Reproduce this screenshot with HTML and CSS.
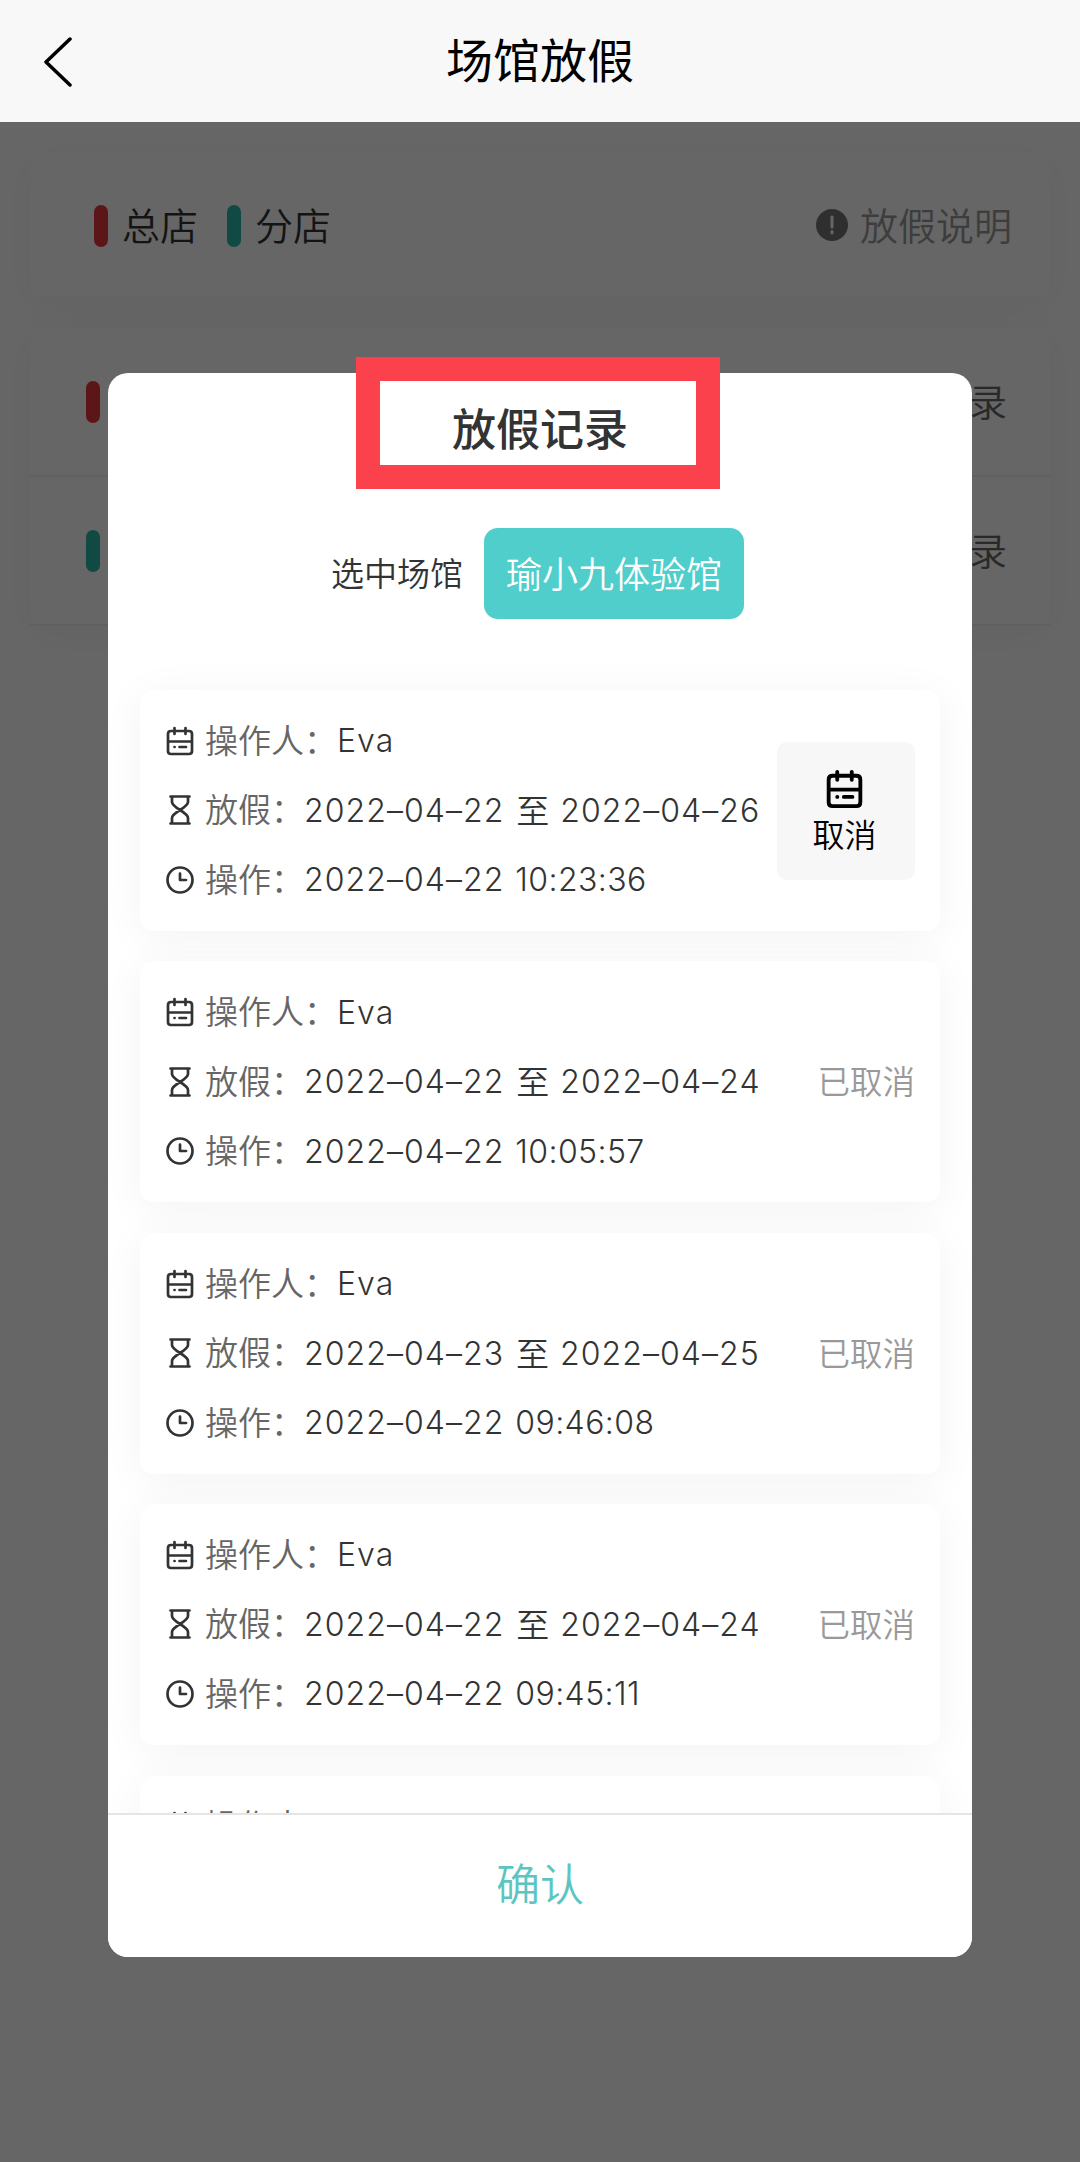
FILE: index.html
```html
<!DOCTYPE html>
<html lang="zh-CN">
<head>
  <meta charset="UTF-8" />
  <title>场馆放假</title>
  <link rel="stylesheet" href="styles.css">
</head>
<body>

  <!-- icons -->
  <svg class="sprite" width="0" height="0">
    <symbol id="calendar" viewBox="0 0 28 30">
      <path d="M5 5H23Q26 5 26 8V25Q26 28 23 28H5Q2 28 2 25V8Q2 5 5 5ZM2 15.500H26M8.500 2V8M19.500 2V8M13.500 21H20M8.500 21H8.600" />
    </symbol>
    <symbol id="hourglass" viewBox="0 0 28 30">
      <path d="M4.500 1.500H23.500M4.500 28.500H23.500M6 2V7Q6 10 14 15Q22 10 22 7V2M6 28V23Q6 20 14 15Q22 20 22 23V28" />
    </symbol>
    <symbol id="clock" viewBox="0 0 28 30">
      <path d="M14 2.500A12.500 12.500 0 1 1 14 27.500A12.500 12.500 0 1 1 14 2.500ZM14 8.500V15H20" />
    </symbol>
  </svg>

  <header class="navbar">
    <svg class="back" viewBox="0 0 30 50"><path d="M27 2L3 25L27 48" /></svg>
    <h1>场馆放假</h1>
  </header>

  <main class="page">
    <section class="panel legend">
      <i class="bar red"></i><span>总店</span>
      <i class="bar teal"></i><span>分店</span>
      <a class="help">
        <svg viewBox="0 0 32 32"><circle cx="16" cy="16" r="16" /><path d="M16 8V18M16 22.500V24" /></svg>
        <span>放假说明</span>
      </a>
    </section>
    <section class="panel venues">
      <div class="venue"><i class="bar red"></i><span>记录</span></div>
      <div class="venue"><i class="bar teal"></i><span>记录</span></div>
    </section>
  </main>

  <div class="mask">
    <div class="modal">
      <h2>放假记录</h2>
      <div class="mark"></div>
      <div class="selected">
        <span>选中场馆</span>
        <button class="venue-btn">瑜小九体验馆</button>
      </div>

      <div class="list">
        <div class="card">
          <div class="info">
            <p><svg><use href="#calendar" /></svg><label>操作人：</label><b>Eva</b></p>
            <p><svg><use href="#hourglass" /></svg><label>放假：</label><b>2022–04–22</b><em>至</em><b>2022–04–26</b></p>
            <p><svg><use href="#clock" /></svg><label>操作：</label><b>2022–04–22</b><b class="time">10:23:36</b></p>
          </div>
          <button class="cancel"><svg><use href="#calendar" /></svg>取消</button>
        </div>
        <div class="card">
          <div class="info">
            <p><svg><use href="#calendar" /></svg><label>操作人：</label><b>Eva</b></p>
            <p><svg><use href="#hourglass" /></svg><label>放假：</label><b>2022–04–22</b><em>至</em><b>2022–04–24</b></p>
            <p><svg><use href="#clock" /></svg><label>操作：</label><b>2022–04–22</b><b class="time">10:05:57</b></p>
          </div>
          <span class="state">已取消</span>
        </div>
        <div class="card">
          <div class="info">
            <p><svg><use href="#calendar" /></svg><label>操作人：</label><b>Eva</b></p>
            <p><svg><use href="#hourglass" /></svg><label>放假：</label><b>2022–04–23</b><em>至</em><b>2022–04–25</b></p>
            <p><svg><use href="#clock" /></svg><label>操作：</label><b>2022–04–22</b><b class="time">09:46:08</b></p>
          </div>
          <span class="state">已取消</span>
        </div>
        <div class="card">
          <div class="info">
            <p><svg><use href="#calendar" /></svg><label>操作人：</label><b>Eva</b></p>
            <p><svg><use href="#hourglass" /></svg><label>放假：</label><b>2022–04–22</b><em>至</em><b>2022–04–24</b></p>
            <p><svg><use href="#clock" /></svg><label>操作：</label><b>2022–04–22</b><b class="time">09:45:11</b></p>
          </div>
          <span class="state">已取消</span>
        </div>
        <div class="card">
          <div class="info">
            <p><svg><use href="#calendar" /></svg><label>操作人：</label></p>
          </div>
        </div>
      </div>

      <button class="confirm">确认</button>
    </div>
  </div>

</body>
</html>
```
FILE: styles.css
```css
* {
  box-sizing: border-box;
}
body {
  margin: 0;
  height: 2162px;
  position: relative;
  overflow: hidden;
  background: #fff;
  color: #333;
  font-family: "Noto Sans CJK SC", sans-serif;
  font-weight: 350;
}
h1, h2, p {
  margin: 0;
}
button {
  border: none;
  padding: 0;
  font-family: inherit;
  font-weight: inherit;
}
svg {
  fill: none;
  stroke: currentColor;
  stroke-linecap: round;
  stroke-linejoin: round;
  flex: none;
}
.sprite {
  position: absolute;
}

/* top bar */
.navbar {
  height: 122px;
  background: #f8f8f8;
  display: grid;
  grid-template-columns: 120px 1fr 120px;
  align-items: center;
}
.navbar h1 {
  padding-bottom: 6px;
  text-align: center;
  font-size: 47px;
  line-height: 60px;
  font-weight: 400;
  color: #000;
}
.back {
  width: 30px;
  height: 50px;
  margin: 2px 0 0 43px;
  color: #000;
  stroke-width: 3.5;
}

/* page under the mask */
.page {
  padding: 32px 30px;
  font-size: 38px;
}
.panel {
  border-radius: 14px;
  background: #fff;
  box-shadow: 0 8px 40px rgba(0, 0, 0, 0.04);
}
.panel span {
  padding-bottom: 5px;
}
.legend {
  height: 143px;
  padding: 0 38px 0 64px;
  display: flex;
  align-items: center;
}
.legend > span {
  margin: 0 29px 0 14px;
}
.bar {
  width: 14px;
  height: 42px;
  border-radius: 7px;
}
.red {
  background: #e8393d;
}
.teal {
  background: #28b9a9;
}
.help {
  display: flex;
  align-items: center;
  gap: 12px;
  margin-left: auto;
  color: #999;
}
.help svg {
  width: 32px;
  height: 32px;
  margin-top: -2px;
  stroke: none;
  fill: #777;
}
.help path {
  stroke: #fff;
  stroke-width: 3;
}
.venues {
  margin-top: 31px;
}
.venue {
  height: 149px;
  padding: 0 43px 0 56px;
  display: flex;
  align-items: center;
  justify-content: space-between;
  border-bottom: 2px solid #f0f0f0;
  color: #666;
}

/* dialog */
.mask {
  position: absolute;
  top: 122px;
  left: 0;
  right: 0;
  bottom: 0;
  padding-top: 251px;
  background: rgba(0, 0, 0, 0.6);
}
.modal {
  position: relative;
  width: 864px;
  height: 1584px;
  margin: 0 auto;
  border-radius: 20px;
  background: #fff;
  display: flex;
  flex-direction: column;
}
.modal h2 {
  height: 112px;
  line-height: 108px;
  text-align: center;
  font-size: 44px;
  font-weight: 500;
}
.mark {
  position: absolute;
  left: 248px;
  top: -16px;
  width: 364px;
  height: 132px;
  border: 24px solid #fb414b;
}
.selected {
  margin-top: 43px;
  height: 91px;
  padding-right: 5px;
  display: flex;
  justify-content: center;
  align-items: center;
  gap: 21px;
  font-size: 33px;
}
.selected span {
  padding-bottom: 4px;
}
.venue-btn {
  width: 260px;
  height: 91px;
  padding-bottom: 4px;
  border-radius: 14px;
  background: #50cecb;
  color: #fff;
  font-size: 36px;
}
.list {
  height: 1194px;
  padding: 71px 32px 0;
  overflow: hidden;
}
.card {
  height: 241px;
  margin-bottom: 30.400px;
  padding: 16px 25px 16px 26px;
  border-radius: 14px;
  background: #fff;
  box-shadow: 0 6px 44px rgba(0, 0, 0, 0.05);
  display: flex;
  justify-content: space-between;
  align-items: center;
}
.info {
  align-self: flex-start;
}
.info p {
  height: 69.500px;
  display: flex;
  align-items: center;
  white-space: nowrap;
  font-size: 33px;
}
.info svg {
  width: 28px;
  height: 30px;
  margin-right: 11px;
  stroke-width: 2.7;
}
.info label {
  padding-bottom: 4px;
  color: #666;
}
.info b {
  font-family: Inter, sans-serif;
  font-size: 32px;
  font-weight: 300;
  letter-spacing: 1.050px;
}
.info em {
  margin: 0 11px 0 12px;
  padding-bottom: 3px;
  font-style: normal;
}
.info .time {
  margin-left: 11px;
  letter-spacing: 0.400px;
}
.cancel {
  width: 138px;
  height: 138px;
  padding-right: 3px;
  border-radius: 10px;
  background: #f7f7f7;
  color: #000;
  display: flex;
  flex-direction: column;
  align-items: center;
  font-size: 32px;
  line-height: 48px;
}
.cancel svg {
  width: 37px;
  height: 40px;
  margin: 27px 0 0;
  stroke-width: 2.9;
}
.state {
  padding-bottom: 4px;
  color: #999;
  font-size: 32.500px;
}
.confirm {
  height: 144px;
  padding-bottom: 8px;
  border-top: 2px solid #e5e5e5;
  border-radius: 0 0 20px 20px;
  background: #fff;
  color: #5cc5c1;
  font-size: 44px;
}
```
